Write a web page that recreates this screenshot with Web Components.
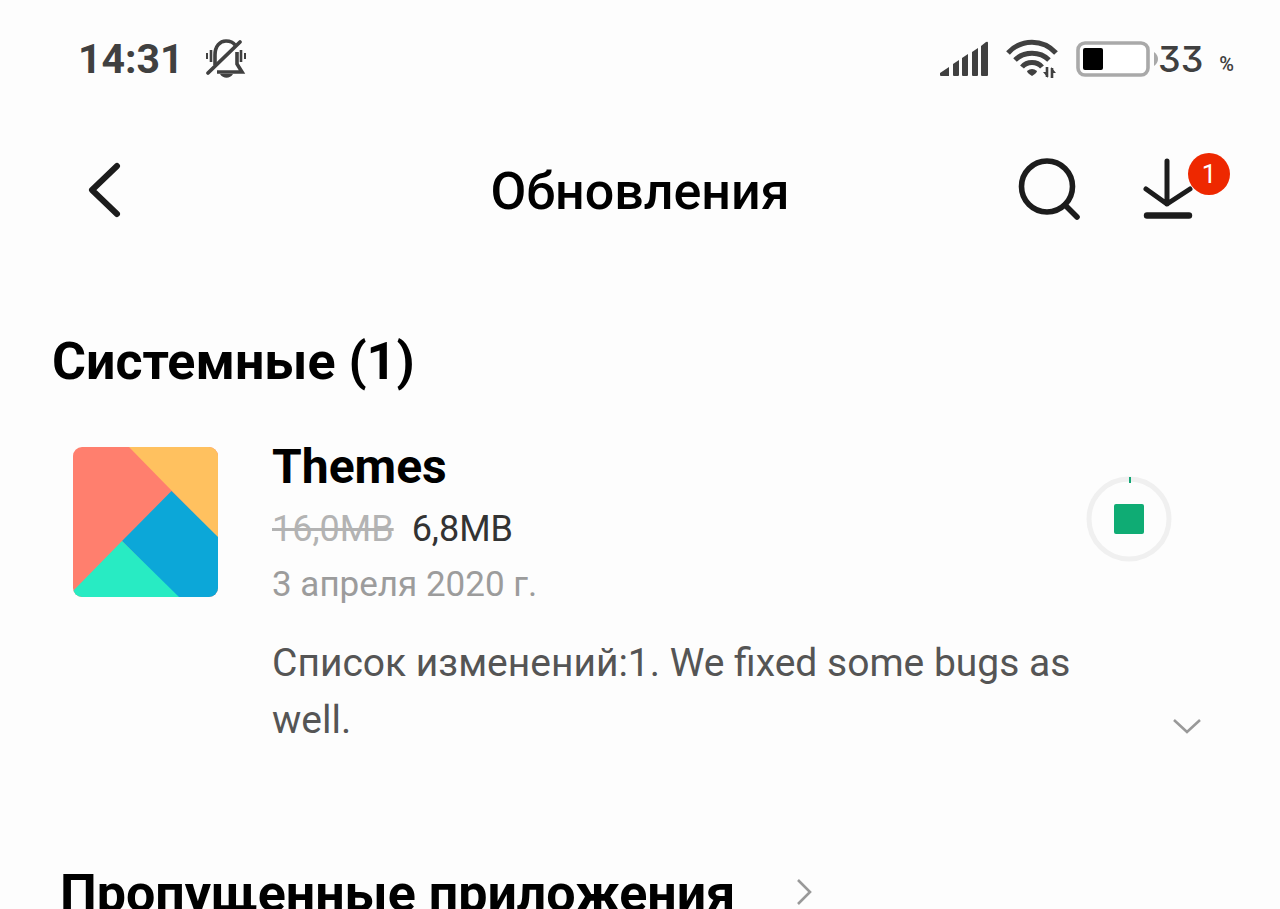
<!DOCTYPE html>
<html lang="ru">
<head>
<meta charset="utf-8">
<meta name="viewport" content="width=device-width, initial-scale=1">
<title>Обновления</title>
<style>
	body {
		margin: 0;
		height: 100vh;
		overflow: hidden;
		background-color: #fdfdfd;
		color: #000;
		font-family: Roboto, "Liberation Sans", sans-serif;
	}
</style>
</head>
<body>
<updates-page>
	<status-bar slot="status" time="14:31" battery="33"></status-bar>
	<page-header slot="header" downloads="1">Обновления</page-header>
	<update-section>
		<span slot="title">Системные (1)</span>
		<update-item>
			<span slot="name">Themes</span>
			<span slot="old-size">16,0MB</span>
			<span slot="size">6,8MB</span>
			<span slot="date">3 апреля 2020 г.</span>
			Список изменений:1. We fixed some bugs as well.
		</update-item>
	</update-section>
	<skipped-link>Пропущенные приложения</skipped-link>
</updates-page>

<script>
/**
 * Attaches an open shadow root and fills it.
 * @param {HTMLElement} host - The custom element.
 * @param {String} html - Styles and markup of the element.
 */
function render(host, html) {
	host.attachShadow({ mode: 'open' }).innerHTML = html;
}

// Shared look of the icon buttons
const buttonStyles = `
	button {
		display: block;
		margin: 0;
		padding: 0;
		border: 0;
		background: none;
		color: inherit;
		font: inherit;
		cursor: pointer;
	}
	svg {
		display: block;
	}
`;

/**
 * Page frame: status bar, header and the list of sections.
 */
class UpdatesPage extends HTMLElement {
	constructor() {
		super();
		render(this, `
	<style>
	:host {
		display: block;
	}
	main {
		padding-top: 70px;
	}
	</style>
	<slot name="status"></slot>
	<slot name="header"></slot>
	<main><slot></slot></main>
		`);
	}
}

/**
 * Phone status bar with the clock, signal and battery.
 */
class StatusBar extends HTMLElement {
	constructor() {
		super();
		const battery = Number(this.getAttribute('battery'));
		render(this, `
	<style>
	:host {
		display: flex;
		align-items: center;
		justify-content: space-between;
		height: 118px;
		padding: 0 46px 0 78px;
		color: #404040;
	}
	div {
		display: flex;
		align-items: center;
	}
	svg {
		display: block;
	}
	.left {
		gap: 21px;
	}
	.time {
		font-size: 41px;
		font-weight: 700;
	}
	.signal {
		margin-right: 18px;
	}
	.wifi {
		margin-right: 18px;
	}
	.level {
		font-family: Inter, Roboto, sans-serif;
		font-feature-settings: "cv09";
		font-size: 36px;
		font-weight: 500;
	}
	.percent {
		align-self: flex-end;
		margin-left: 16px;
		font-size: 20px;
		font-weight: 500;
		line-height: 34px;
	}
	</style>
	<div class="left">
		<span class="time">${this.getAttribute('time')}</span>
		<svg width="42" height="40" viewBox="0 0 42 40" fill="none" stroke="currentColor" stroke-width="3">
			<path d="M10 26V16C10 7 15 2 21 2c4 0 7 1 9 4M32 13v12l5 8H12" stroke-width="3.6"/>
			<path d="M3 34L35 3" stroke-width="3.8" stroke-linecap="round"/>
			<path d="M6 11v12M36 11v12" stroke-width="2.6"/>
			<path d="M2 14v6M40 14v6" stroke-width="2"/>
			<path d="M15 35h13c-3 5-10 5-13 0z" fill="currentColor" stroke="none"/>
		</svg>
	</div>
	<div>
		<svg class="signal" width="49" height="36" viewBox="0 0 49 36" fill="currentColor">
			<path d="M1 32l9-6v9H2q-1 0-1-1zM14 23l6-4v15q0 1-1 1h-4q-1 0-1-1zM23 17l6-4v21q0 1-1 1h-4q-1 0-1-1zM33 11l6-4v27q0 1-1 1h-4q-1 0-1-1zM42 5l5-4q2-1 2 1v32q0 1-1 1h-5q-1 0-1-1z"/>
		</svg>
		<svg class="wifi" width="52" height="40" viewBox="0 0 52 40" fill="none" stroke="currentColor" stroke-width="5">
			<path d="M2 14C15-.5 37-.5 50 14M9 21c9-9 25-9 34 0M16 28c5-6 15-6 20 0"/>
			<path d="M21 32q5-4 10 0q0 2-5 5q-5-3-5-5z" fill="currentColor" stroke="none"/>
			<path d="M41 28v10M46 39V29" stroke-width="2.6"/>
			<path d="M42 39v-6h-5zM45 28v6h5z" fill="currentColor" stroke="none"/>
		</svg>
		<svg width="82" height="36" viewBox="0 0 82 36">
			<rect x="2" y="2" width="70" height="32" rx="7" fill="#fff" stroke="#a9a9a9" stroke-width="3.6"/>
			<rect x="7" y="7" width="${Math.round(battery * 0.62)}" height="22" rx="2" fill="#000"/>
			<path d="M78 11q4 3 4 7t-4 7z" fill="#a9a9a9"/>
		</svg>
		<span class="level">${battery}</span>
		<span class="percent">%</span>
	</div>
		`);
	}
}

/**
 * Title bar with back, search and downloads buttons.
 */
class PageHeader extends HTMLElement {
	constructor() {
		super();
		render(this, `
	<style>
	${buttonStyles}
	:host {
		display: grid;
		grid-template-columns: 1fr auto 1fr;
		align-items: center;
		height: 144px;
		padding: 0 50px 0 86px;
		color: #1c1c1c;
	}
	h1 {
		margin: 4px 36px 0 0;
		color: #000;
		font-size: 52px;
		font-weight: 500;
		line-height: 60px;
	}
	.actions {
		display: flex;
		justify-content: flex-end;
		gap: 61px;
	}
	.downloads {
		position: relative;
		padding-right: 37px;
	}
	.badge {
		position: absolute;
		top: -5px;
		right: 0;
		width: 42px;
		height: 42px;
		border-radius: 50%;
		background-color: #ee2800;
		color: #fff;
		font-size: 26px;
		line-height: 42px;
		text-align: center;
	}
	</style>
	<button type="button" aria-label="Назад">
		<svg width="36" height="56" viewBox="0 0 36 56" fill="none" stroke="currentColor" stroke-width="6" stroke-linecap="round" stroke-linejoin="round">
			<path d="M31 4L6 28l25 24"/>
		</svg>
	</button>
	<h1><slot></slot></h1>
	<div class="actions">
		<button type="button" aria-label="Поиск">
			<svg width="64" height="64" viewBox="0 0 64 64" fill="none" stroke="currentColor" stroke-width="5.6" stroke-linecap="round">
				<circle cx="29" cy="28.5" r="25.5"/>
				<path d="M47 47l12 12"/>
			</svg>
		</button>
		<button class="downloads" type="button" aria-label="Загрузки">
			<svg width="50" height="64" viewBox="0 0 50 64" fill="none" stroke="currentColor" stroke-width="5" stroke-linecap="round" stroke-linejoin="round">
				<path d="M24 3v43M3 31l21 15 23-15"/>
				<path d="M4 57.5h42" stroke-width="6.4"/>
			</svg>
			<span class="badge">${this.getAttribute('downloads')}</span>
		</button>
	</div>
		`);
	}
}

/**
 * Group of updates with a heading.
 */
class UpdateSection extends HTMLElement {
	constructor() {
		super();
		render(this, `
	<style>
	:host {
		display: block;
	}
	h2 {
		margin: 0 0 47px;
		padding-left: 52px;
		font-size: 52px;
		font-weight: 700;
		line-height: 60px;
	}
	</style>
	<h2><slot name="title"></slot></h2>
	<slot></slot>
		`);
	}
}

/**
 * One application update with its sizes, date and change list.
 */
class UpdateItem extends HTMLElement {
	constructor() {
		super();
		render(this, `
	<style>
	${buttonStyles}
	:host {
		display: grid;
		grid-template-columns: 145px 1fr auto;
		column-gap: 54px;
		align-items: start;
		padding: 0 68px 0 73px;
	}
	.icon {
		margin-top: 8px;
		border-radius: 9px;
	}
	h3 {
		margin: 0 0 6px;
		font-size: 48px;
		font-weight: 700;
		line-height: 56px;
	}
	.sizes {
		display: flex;
		gap: 18px;
		color: #333;
		font-size: 36px;
		line-height: 56px;
	}
	del {
		color: #b3b3b3;
	}
	.date {
		color: #9c9c9c;
		font-size: 35px;
		line-height: 56px;
	}
	.stop {
		margin: 37px 40px 0 0;
	}
	.changes {
		grid-column: 2 / -1;
		display: flex;
		align-items: flex-end;
		justify-content: space-between;
		gap: 60px;
		margin-top: 22px;
		color: #555;
		font-size: 39px;
		line-height: 57px;
	}
	p {
		margin: 0;
	}
	.expand {
		flex: none;
		padding: 10px;
		color: #999;
	}
	</style>
	<svg class="icon" width="145" height="150" viewBox="0 0 145 150">
		<path d="M0 0h145v150H0z" fill="#ff7f6e"/>
		<path d="M56 0h89v91z" fill="#ffc15f"/>
		<path d="M98.5 44L145 90v60h-41L49 94z" fill="#0ca7d8"/>
		<path d="M0 144l49-50 57 56H0z" fill="#28ebc3"/>
	</svg>
	<div>
		<h3><slot name="name"></slot></h3>
		<div class="sizes"><del><slot name="old-size"></slot></del><slot name="size"></slot></div>
		<div class="date"><slot name="date"></slot></div>
	</div>
	<button class="stop" type="button" aria-label="Остановить">
		<svg width="86" height="86" viewBox="0 0 86 86">
			<circle cx="43" cy="43" r="40" fill="none" stroke="#f0f0f0" stroke-width="5"/>
			<path d="M44 1v6" stroke="#12a674" stroke-width="2"/>
			<rect x="28" y="28" width="30" height="30" rx="2" fill="#0fac74"/>
		</svg>
	</button>
	<div class="changes">
		<p><slot></slot></p>
		<button class="expand" type="button" aria-label="Развернуть">
			<svg width="30" height="26" viewBox="0 0 30 26" fill="none" stroke="currentColor" stroke-width="2.6">
				<path d="M2 7l13 12L28 7"/>
			</svg>
		</button>
	</div>
		`);
	}
}

/**
 * Heading that leads to the skipped applications.
 */
class SkippedLink extends HTMLElement {
	constructor() {
		super();
		render(this, `
	<style>
	:host {
		display: block;
		margin-top: 115px;
		padding-left: 60px;
	}
	h2 {
		margin: 0;
		font-size: 52px;
		font-weight: 700;
		line-height: 60px;
	}
	a {
		display: inline-flex;
		align-items: center;
		gap: 60px;
		color: inherit;
		text-decoration: none;
	}
	</style>
	<h2><a href="#skipped"><slot></slot>
		<svg width="18" height="32" viewBox="0 0 18 32" fill="none" stroke="#999" stroke-width="2.6">
			<path d="M3 2l12 12L3 26"/>
		</svg>
	</a></h2>
		`);
	}
}

customElements.define('updates-page', UpdatesPage);
customElements.define('status-bar', StatusBar);
customElements.define('page-header', PageHeader);
customElements.define('update-section', UpdateSection);
customElements.define('update-item', UpdateItem);
customElements.define('skipped-link', SkippedLink);
</script>
</body>
</html>
